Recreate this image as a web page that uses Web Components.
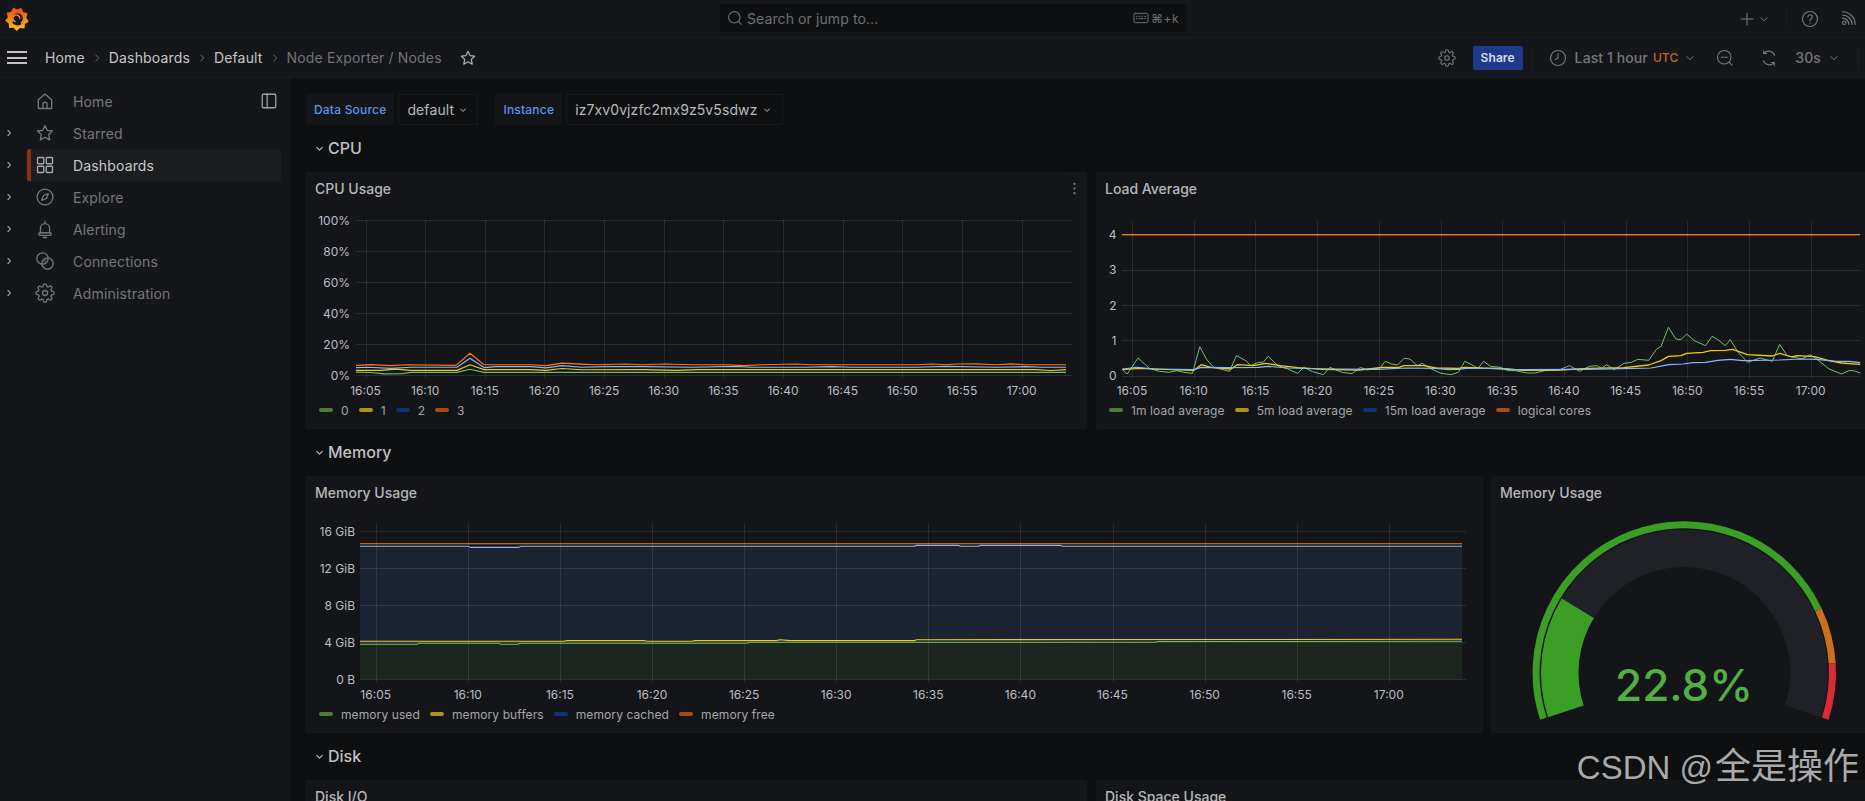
<!DOCTYPE html>
<html lang="en">
<head>
<meta charset="utf-8">
<title>Node Exporter / Nodes</title>
<style>
	html, body { margin: 0; height: 801px; overflow: hidden; background: #0e0f11; }
	body { font-family: Inter, "Liberation Sans", sans-serif; color: #c4c4c8; }
</style>
</head>
<body>
<gf-app>
	<gf-topbar slot="top"></gf-topbar>
	<gf-toolbar slot="top"></gf-toolbar>
	<gf-sidebar slot="nav">
		<gf-nav-item icon="home" dock>Home</gf-nav-item>
		<gf-nav-item icon="star" expand>Starred</gf-nav-item>
		<gf-nav-item icon="apps" expand active>Dashboards</gf-nav-item>
		<gf-nav-item icon="compass" expand>Explore</gf-nav-item>
		<gf-nav-item icon="bell" expand>Alerting</gf-nav-item>
		<gf-nav-item icon="link" expand>Connections</gf-nav-item>
		<gf-nav-item icon="cog" expand>Administration</gf-nav-item>
	</gf-sidebar>
	<gf-vars>
		<gf-var label="Data Source" value="default" style="--w:80px"></gf-var>
		<gf-var label="Instance" value="iz7xv0vjzfc2mx9z5v5sdwz" style="--w:217px"></gf-var>
	</gf-vars>
	<gf-row title="CPU" style="--cols:781px 781px;--gap:9px">
		<gf-panel title="CPU Usage" menu><gf-chart name="cpu"></gf-chart></gf-panel>
		<gf-panel title="Load Average"><gf-chart name="load"></gf-chart></gf-panel>
	</gf-row>
	<gf-row title="Memory" style="--cols:1177px 386px;--gap:8px">
		<gf-panel title="Memory Usage"><gf-chart name="memory"></gf-chart></gf-panel>
		<gf-panel title="Memory Usage"><gf-gauge value="22.8"></gf-gauge></gf-panel>
	</gf-row>
	<gf-row title="Disk" style="--cols:781px 781px;--gap:9px">
		<gf-panel title="Disk I/O"></gf-panel>
		<gf-panel title="Disk Space Usage"></gf-panel>
	</gf-row>
</gf-app>
<gf-watermark><span>CSDN @</span>全是操作</gf-watermark>

<script>
	const ICONS = {
		home: `<path d="M4 10.5 12 3.5l8 7V20a1 1 0 0 1-1 1H5a1 1 0 0 1-1-1z"/><path d="M9.5 21v-5a2.5 2.5 0 0 1 5 0v5"/>`,
		star: `<path d="M12 3l2.7 5.8 6.3.8-4.6 4.3 1.2 6.3L12 17.1l-5.6 3.1 1.2-6.3L3 9.6l6.3-.8z"/>`,
		apps: `<rect x="3" y="3" width="7.5" height="7.5" rx=".8"/><rect x="13.5" y="3" width="7.5" height="7.5" rx=".8"/><rect x="3" y="13.5" width="7.5" height="7.5" rx=".8"/><rect x="13.5" y="13.5" width="7.5" height="7.5" rx=".8"/>`,
		compass: `<circle cx="12" cy="12" r="9.5"/><path d="M16 8l-2.2 5.8L8 16l2.2-5.8z"/>`,
		bell: `<path d="M12 2.5V5M6.5 16.5V11a5.5 5.5 0 0 1 11 0v5.5"/><rect x="4.5" y="16.5" width="15" height="3.2" rx="1.4"/><path d="M10 22.2h4"/>`,
		link: `<circle cx="9" cy="9" r="6.8"/><circle cx="15" cy="15" r="6.8"/><path d="M10 13.5l3.5-3.5" stroke-width="1.2"/>`,
		cog: `<circle cx="12" cy="12" r="3"/><path d="M19.4 15a1.65 1.65 0 0 0 .33 1.82l.06.06a2 2 0 0 1-2.83 2.83l-.06-.06a1.65 1.65 0 0 0-2.82 1.18V21a2 2 0 0 1-4 0v-.09a1.65 1.65 0 0 0-2.82-1.18l-.06.06a2 2 0 0 1-2.83-2.83l.06-.06A1.65 1.65 0 0 0 3.09 14H3a2 2 0 0 1 0-4h.09A1.65 1.65 0 0 0 4.27 7.18l-.06-.06a2 2 0 0 1 2.83-2.83l.06.06A1.65 1.65 0 0 0 10 3.09V3a2 2 0 0 1 4 0v.09a1.65 1.65 0 0 0 2.82 1.18l.06-.06a2 2 0 0 1 2.83 2.83l-.06.06A1.65 1.65 0 0 0 20.91 10H21a2 2 0 0 1 0 4h-.09a1.65 1.65 0 0 0-1.51 1z"/>`,
		dock: `<rect x="3" y="3" width="18" height="18" rx="1.5"/><path d="M9.5 3v18"/>`,
		right: `<path d="M9.5 6l6 6-6 6"/>`,
		down: `<path d="M6 9.5l6 6 6-6"/>`,
		plus: `<path d="M12 3v18M3 12h18"/>`,
		help: `<circle cx="12" cy="12" r="10"/><path d="M9.2 9.3a2.9 2.9 0 1 1 4.4 2.5c-1 .6-1.6 1.2-1.6 2.4"/><path d="M12 17.3v.2"/>`,
		rss: `<circle cx="6" cy="18" r="2.4"/><path d="M3.5 11.5a9 9 0 0 1 9 9M3.5 7a13.5 13.5 0 0 1 13.5 13.5M3.5 2.5a18 18 0 0 1 18 18"/>`,
		search: `<circle cx="11" cy="11" r="8.5"/><path d="M17.3 17.3 21.5 21.5"/>`,
		clock: `<circle cx="12" cy="12" r="10"/><path d="M12 6.5V12l-3.5 2"/>`,
		zoomout: `<circle cx="11" cy="11" r="9"/><path d="M7 11h8M17.5 17.5l4 4"/>`,
		sync: `<path d="M4.5 15.5A8.5 8.5 0 0 0 19 18.2M19.5 8.5A8.5 8.5 0 0 0 5 5.8"/><path d="M5 2v4h4M19 22v-4h-4"/>`,
		keyboard: `<rect x="1.5" y="5" width="21" height="14" rx="2"/><path d="M5 9.5h1M9 9.5h1M13 9.5h1M17.5 9.5h1.5M5 13h1.5M9 13h6M17.5 13h1.5"/>`,
		kebab: `<path d="M12 4.5v.1M12 12v.1M12 19.5v.1" stroke-width="3.6"/>`,
	};

	class GfIcon extends HTMLElement {
		constructor() {
			super();
			this.attachShadow({ mode: "open" });
		}
		connectedCallback() {
			const size = this.getAttribute("size") || 16;
			const stroke = this.getAttribute("stroke") || 1.7;
			this.shadowRoot.innerHTML = `
				<style>
					:host { display: inline-flex; flex: none; width: ${size}px; height: ${size}px; }
					svg { display: block; fill: none; stroke: currentColor; stroke-linecap: round; stroke-linejoin: round; }
				</style>
				<svg width="${size}" height="${size}" viewBox="0 0 24 24" stroke-width="${stroke}">${ICONS[this.getAttribute("name")]}</svg>
			`;
		}
	}

	class GfLogo extends HTMLElement {
		constructor() {
			super();
			this.attachShadow({ mode: "open" });
		}
		getGear() {
			// contorno dentado del logo
			const pts = [];
			for (let i = 0; i < 18; i++) {
				const a = (i / 18) * Math.PI * 2 + 0.2;
				const r = i % 2 ? 9.4 : 12;
				pts.push(`${(12 + r * Math.cos(a)).toFixed(2)},${(12 + r * Math.sin(a)).toFixed(2)}`);
			}
			return pts.join(" ");
		}
		connectedCallback() {
			this.shadowRoot.innerHTML = `
				<style>:host { display: block; width: 24px; height: 24px; }</style>
				<svg width="24" height="24" viewBox="0 0 24 24">
					<defs><linearGradient id="g" x1="0" y1="0" x2="0" y2="1"><stop offset="0" stop-color="#ee4b23"/><stop offset="1" stop-color="#fbc20e"/></linearGradient></defs>
					<polygon points="${this.getGear()}" fill="url(#g)"/>
					<circle cx="12.6" cy="12.4" r="6.2" fill="#141619"/>
					<path d="M8 15a6 6 0 1 1 8 1.6" fill="none" stroke="url(#g)" stroke-width="1.5" transform="translate(-.2 -.2)"/>
					<path d="M11 15.2a3.4 3.4 0 1 1 4-2.6" fill="none" stroke="#f78e1e" stroke-width="1.4" transform="translate(-.4 -.6)"/>
				</svg>
			`;
		}
	}

	class GfApp extends HTMLElement {
		constructor() {
			super();
			this.attachShadow({ mode: "open" });
		}
		connectedCallback() {
			this.shadowRoot.innerHTML = `
				<style>
					:host { display: block; height: 801px; overflow: hidden; }
					.body { display: flex; height: 723px; }
					main { flex: 1; min-width: 0; overflow: hidden; padding: 16px 0 0 16px; }
				</style>
				<slot name="top"></slot>
				<div class="body">
					<slot name="nav"></slot>
					<main><slot></slot></main>
				</div>
			`;
		}
	}

	class GfTopbar extends HTMLElement {
		constructor() {
			super();
			this.attachShadow({ mode: "open" });
		}
		connectedCallback() {
			this.shadowRoot.innerHTML = `
				<style>
					:host { display: flex; align-items: center; height: 37px; background: #141619; border-bottom: 1px solid #1a1c1f; padding-left: 5px; position: relative; color: #77787c; box-sizing: content-box; }
					.search { position: absolute; left: 719px; top: 3px; width: 468px; height: 30px; box-sizing: border-box; display: flex; align-items: center; padding: 0 7px 0 7px; background: #0e0f11; border: 1px solid #131518; color: #6f7074; font-size: 14px; }
					.search span { margin-left: 4px; flex: 1; letter-spacing: .1px; }
					.search b { font-weight: 400; font-size: 12px; margin-left: 2px; letter-spacing: .5px; }
					.right { margin-left: auto; display: flex; align-items: center; }
					.sep { width: 1px; height: 24px; background: #191b1e; margin: 0 15px 0 16px; }
				</style>
				<gf-logo></gf-logo>
				<div class="search">
					<gf-icon name="search" size="16"></gf-icon>
					<span>Search or jump to...</span>
					<gf-icon name="keyboard" size="16" stroke="1.5"></gf-icon>
					<b>⌘+k</b>
				</div>
				<div class="right">
					<gf-icon name="plus" size="16" stroke="1.6"></gf-icon>
					<gf-icon name="down" size="12" style="margin-left:3px" stroke="2"></gf-icon>
					<div class="sep"></div>
					<gf-icon name="help" size="18" stroke="1.5" style="margin:0 -1px"></gf-icon>
					<gf-icon name="rss" size="17" stroke="1.6" style="margin:0 8px 0 22px"></gf-icon>
				</div>
			`;
		}
	}

	class GfToolbar extends HTMLElement {
		constructor() {
			super();
			this.attachShadow({ mode: "open" });
		}
		connectedCallback() {
			this.shadowRoot.innerHTML = `
				<style>
					:host { display: flex; align-items: center; height: 39px; background: #141619; border-bottom: 1px solid #1a1c1f; color: #c6c6c8; font-size: 14px; letter-spacing: .15px; }
					.burger { width: 20px; height: 13px; margin: 0 18px 0 7px; border-top: 2px solid #c4c4c8; border-bottom: 2px solid #c4c4c8; box-sizing: border-box; position: relative; }
					.burger::after { content: ""; position: absolute; left: 0; right: 0; top: 3.5px; height: 2px; background: #c4c4c8; }
					.sep { color: #6c6d70; margin: 0 6px; }
					.last { color: #737478; }
					.star { margin-left: 17px; color: #b5b5b8; }
					.right { margin-left: auto; display: flex; align-items: center; color: #77787c; font-weight: 500; letter-spacing: .1px; }
					.share { background: #1f3a8a; color: #d7dbe8; font-size: 12px; height: 24px; width: 50px; border-radius: 2px; display: flex; align-items: center; justify-content: center; margin: 0 9px 0 17px; font-weight: 600; }
					.div { width: 1px; height: 24px; background: #1b1d20; }
					.utc { color: #c4691f; font-size: 12px; margin: 0 6px 0 5px; }
				</style>
				<div class="burger"></div>
				<span>Home</span><gf-icon class="sep" name="right" size="12" stroke="2"></gf-icon>
				<span>Dashboards</span><gf-icon class="sep" name="right" size="12" stroke="2"></gf-icon>
				<span>Default</span><gf-icon class="sep" name="right" size="12" stroke="2"></gf-icon>
				<span class="last">Node Exporter / Nodes</span>
				<gf-icon class="star" name="star" size="18" stroke="1.6"></gf-icon>
				<div class="right">
					<gf-icon name="cog" size="18" stroke="1.5"></gf-icon>
					<div class="share">Share</div>
					<div class="div"></div>
					<gf-icon name="clock" size="18" stroke="1.5" style="margin:0 8px 0 16px"></gf-icon>
					<span>Last 1 hour</span>
					<span class="utc">UTC</span>
					<gf-icon name="down" size="12" stroke="2"></gf-icon>
					<gf-icon name="zoomout" size="18" stroke="1.5" style="margin-left:20px"></gf-icon>
					<gf-icon name="sync" size="18" stroke="1.5" style="margin:0 17px 0 26px"></gf-icon>
					<span>30s</span>
					<gf-icon name="down" size="12" stroke="2" style="margin:0 18px 0 7px"></gf-icon>
					<div class="div" style="margin-right:6px"></div>
				</div>
			`;
		}
	}

	class GfSidebar extends HTMLElement {
		constructor() {
			super();
			this.attachShadow({ mode: "open" });
		}
		connectedCallback() {
			this.shadowRoot.innerHTML = `
				<style>
					:host { display: block; flex: none; width: 290px; box-sizing: border-box; background: #141619; padding-top: 7px; }
				</style>
				<slot></slot>
			`;
		}
	}

	class GfNavItem extends HTMLElement {
		constructor() {
			super();
			this.attachShadow({ mode: "open" });
		}
		connectedCallback() {
			const active = this.hasAttribute("active");
			this.shadowRoot.innerHTML = `
				<style>
					:host { display: flex; align-items: center; height: 32px; color: ${active ? "#c8c8ca" : "#76777a"}; font-size: 14px; letter-spacing: .15px; position: relative; }
					.caret { width: 27px; flex: none; display: flex; justify-content: center; padding-right: 9px; box-sizing: border-box; color: #9a9b9e; }
					.row { flex: none; width: 254px; height: 32px; display: flex; align-items: center; box-sizing: border-box; background: ${active ? "#1b1d20" : "transparent"}; border-left: 4px solid ${active ? "#8a3113" : "transparent"}; border-radius: 2px; padding-left: 4px; }
					.ico { color: ${active ? "#a8a8ab" : "#76777a"}; margin-right: 18px; }
					.dock { margin-left: auto; margin-right: 3px; color: #a0a1a4; }
				</style>
				<div class="caret">${this.hasAttribute("expand") ? `<gf-icon name="right" size="10" stroke="2.6"></gf-icon>` : ""}</div>
				<div class="row">
					<gf-icon class="ico" name="${this.getAttribute("icon")}" size="20" stroke="1.6"></gf-icon>
					<slot></slot>
					${this.hasAttribute("dock") ? `<gf-icon class="dock" name="dock" size="18" stroke="1.7"></gf-icon>` : ""}
				</div>
			`;
		}
	}

	class GfVars extends HTMLElement {
		constructor() {
			super();
			this.attachShadow({ mode: "open" });
		}
		connectedCallback() {
			this.shadowRoot.innerHTML = `
				<style>:host { display: flex; gap: 17px; height: 31px; }</style>
				<slot></slot>
			`;
		}
	}

	class GfVar extends HTMLElement {
		constructor() {
			super();
			this.attachShadow({ mode: "open" });
		}
		connectedCallback() {
			this.shadowRoot.innerHTML = `
				<style>
					:host { display: flex; gap: 4px; height: 31px; }
					.label { display: flex; align-items: center; padding: 0 8px; background: #131518; color: #5c95ea; font-size: 12px; font-weight: 500; letter-spacing: .2px; }
					.value { display: flex; align-items: center; box-sizing: border-box; width: var(--w); padding-left: 8px; background: #0e0f11; border: 1px solid #17191c; color: #b9b9bb; font-size: 14px; gap: 4px; letter-spacing: .1px; }
				</style>
				<div class="label">${this.getAttribute("label")}</div>
				<div class="value">${this.getAttribute("value")}<gf-icon name="down" size="10" stroke="2.4"></gf-icon></div>
			`;
		}
	}

	class GfRow extends HTMLElement {
		constructor() {
			super();
			this.attachShadow({ mode: "open" });
		}
		connectedCallback() {
			this.shadowRoot.innerHTML = `
				<style>
					:host { display: block; }
					.head { height: 47px; display: flex; align-items: center; padding: 0 0 1px 8px; box-sizing: border-box; color: #c0c0c3; font-size: 16px; font-weight: 500; gap: 3px; }
					.panels { display: grid; grid-template-columns: var(--cols); gap: var(--gap); width: 1600px; }
				</style>
				<div class="head"><gf-icon name="down" size="11" stroke="2.4"></gf-icon>${this.getAttribute("title")}</div>
				<div class="panels"><slot></slot></div>
			`;
		}
	}

	class GfPanel extends HTMLElement {
		constructor() {
			super();
			this.attachShadow({ mode: "open" });
		}
		connectedCallback() {
			this.shadowRoot.innerHTML = `
				<style>
					:host { display: block; height: 257px; position: relative; background: #131518; border: 1px solid #16181b; box-sizing: border-box; border-radius: 2px; overflow: hidden; }
					.title { height: 34px; box-sizing: border-box; padding: 7px 8px 0; font-size: 14px; line-height: 17px; font-weight: 500; color: #b7b7b9; }
					.menu { position: absolute; right: 0; top: 0; width: 24px; height: 33px; background: #141619; color: #77787b; display: flex; justify-content: center; padding-top: 8px; box-sizing: border-box; }
				</style>
				<div class="title">${this.getAttribute("title")}</div>
				${this.hasAttribute("menu") ? `<div class="menu"><gf-icon name="kebab" size="15"></gf-icon></div>` : ""}
				<slot></slot>
			`;
		}
	}

	const GREEN = { line: "#73bf69", key: "#4e7c37" };
	const YELLOW = { line: "#f2cc0c", key: "#ad9317" };
	const BLUE = { line: "#8ab8ff", key: "#123179" };
	const ORANGE = { line: "#ff780a", key: "#ab4a13" };
	const TIMES = ["16:05", "16:10", "16:15", "16:20", "16:25", "16:30", "16:35", "16:40", "16:45", "16:50", "16:55", "17:00"];

	// puntos de la grafica de load, tomados de la captura ampliada
	const fromLoad = (pts) => pts.map(([x, y]) => [x / 2.023 - 5.9, y / 3 - 48]);
	const cpuY = (pts) => pts.map(([x, v]) => [x, 168 - v * 1.55]);

	const CHARTS = {
		cpu: {
			left: 50, right: 766, top: 13, bottom: 168, labelRight: 44,
			first: 59.5, step: 59.65,
			ticks: [["100%", 13], ["80%", 44], ["60%", 75], ["40%", 106], ["20%", 137], ["0%", 168]],
			width: 1.2,
			series: [
				{ name: "0", ...GREEN, pts: cpuY([[50, 1.9], [65, 1.6], [78, .7], [95, .8], [105, 1.7], [151, 1.7], [164, 3.7], [178, 1.7], [760, 1.7]]) },
				{ name: "1", ...YELLOW, pts: cpuY([[50, 3], [75, 3], [90, 3.8], [105, 3], [151, 3], [164, 6.6], [178, 3.5], [225, 3.5], [240, 3], [256, 4.2], [275, 3.4], [340, 3.5], [370, 3], [390, 3.5], [730, 3.5], [745, 2.9], [760, 3.5]]) },
				{ name: "2", ...BLUE, pts: cpuY([[50, 4.7], [62, 5], [85, 4.3], [105, 5], [151, 5], [164, 10.8], [178, 4.8], [190, 5.4], [225, 5.4], [240, 4.6], [256, 6], [275, 5], [300, 5.4], [340, 5.4], [385, 5], [430, 5.6], [445, 5], [500, 5], [525, 5.4], [545, 5], [610, 5], [640, 5.6], [690, 5], [720, 5.4], [735, 5], [760, 5]]) },
				{ name: "3", ...ORANGE, pts: cpuY([[50, 6.2], [65, 6.7], [85, 6], [100, 6.6], [150, 6.2], [164, 14], [178, 6.6], [225, 6.6], [240, 6], [256, 7.7], [275, 7], [290, 6.6], [320, 7.1], [335, 6.6], [360, 7.1], [385, 6.6], [420, 6.6], [438, 6], [455, 6.6], [490, 7.1], [505, 6.6], [610, 6.6], [625, 7.1], [640, 6.6], [650, 7.1], [670, 7.2], [690, 6.6], [705, 7.2], [720, 6.6], [760, 6.6]]) },
			],
		},
		load: {
			left: 26, right: 764, top: 13.7, bottom: 168.7, labelRight: 20.5,
			first: 36, step: 61.7, width: 1,
			ticks: [["4", 27.7], ["3", 62.7], ["2", 98], ["1", 133.3], ["0", 168.7]],
			series: [
				{ name: "1m load average", ...GREEN, pts: fromLoad([[65,630],[75,645],[97,597],[120,628],[140,637],[160,640],[175,635],[190,640],[207,643],[222,563],[235,600],[250,625],[282,637],[296,590],[315,605],[325,620],[340,610],[350,610],[360,592],[380,620],[400,630],[420,643],[432,625],[450,638],[472,647],[485,625],[510,640],[530,644],[547,625],[560,633],[575,628],[585,630],[597,607],[610,615],[622,618],[635,598],[647,600],[662,620],[672,613],[690,630],[710,643],[730,647],[745,640],[758,607],[778,622],[785,628],[796,607],[810,622],[830,625],[845,635],[860,635],[885,642],[900,642],[920,635],[950,632],[970,620],[990,637],[1010,622],[1025,620],[1035,628],[1045,617],[1060,632],[1080,613],[1095,610],[1108,601],[1130,604],[1145,572],[1155,562],[1170,505],[1185,540],[1195,542],[1207,525],[1222,545],[1245,560],[1258,532],[1270,542],[1285,560],[1295,542],[1310,578],[1330,610],[1355,597],[1380,607],[1395,556],[1410,590],[1425,595],[1440,600],[1456,587],[1470,600],[1495,630],[1520,645],[1535,635],[1545,635],[1558,642]]) },
				{ name: "5m load average", ...YELLOW, width: 1.3, pts: fromLoad([[65,632],[100,628],[150,631],[210,634],[225,617],[245,625],[285,630],[298,617],[330,620],[355,613],[385,620],[420,626],[470,631],[545,633],[590,625],[625,625],[635,620],[675,620],[700,627],[745,628],[758,625],[840,630],[880,634],[950,633],[1010,628],[1080,626],[1130,618],[1155,605],[1170,592],[1195,590],[1207,583],[1240,580],[1255,575],[1285,574],[1300,571],[1330,587],[1380,591],[1395,583],[1420,594],[1430,590],[1465,593],[1495,605],[1520,612],[1558,616]]) },
				{ name: "15m load average", ...BLUE, width: 1.2, pts: fromLoad([[65,630],[95,625],[130,630],[210,632],[225,625],[280,626],[340,625],[360,622],[400,627],[500,630],[580,631],[640,627],[700,628],[725,632],[745,631],[760,628],[830,628],[860,632],[1000,631],[1100,628],[1135,627],[1170,617],[1200,615],[1220,611],[1245,610],[1270,604],[1295,601],[1320,605],[1395,603],[1440,600],[1470,601],[1510,607],[1535,607],[1558,611]]) },
				{ name: "logical cores", ...ORANGE, width: 1.2, pts: [[26, 27.7], [764, 27.7]] },
			],
		},
		memory: {
			left: 54, right: 1160, top: 13, bottom: 168.3, labelRight: 49,
			first: 69.7, step: 92.1, width: 1.1,
			ticks: [["16 GiB", 20], ["12 GiB", 57.3], ["8 GiB", 94.3], ["4 GiB", 131.3], ["0 B", 168.3]],
			series: [
				{ name: "memory used", ...GREEN, fill: "#1c251e", pts: [[54, 133.3], [111, 133.3], [113, 132.3], [193, 132.3], [195, 133.3], [212, 133.3], [214, 132.3], [441, 132.3], [444, 131.3], [850, 131.3], [852, 130.5], [1156, 130.3]] },
				{ name: "memory buffers", ...YELLOW, pts: [[54, 130.3], [258, 130.3], [261, 129.6], [338, 129.6], [341, 130.3], [386, 130.3], [389, 129.6], [470, 129.6], [474, 128.7], [484, 129.6], [608, 129.6], [611, 128.7], [1156, 128.3]] },
				{ name: "memory cached", ...BLUE, fill: "#1b2430", pts: [[54, 35.3], [162, 35.3], [165, 36.4], [212, 36.4], [215, 35.3], [608, 35.3], [611, 34.4], [652, 34.4], [655, 35.2], [672, 35.2], [675, 34.4], [754, 34.4], [757, 35.2], [1156, 35.2]] },
				{ name: "memory free", ...ORANGE, pts: [[54, 32.7], [1156, 32.7]] },
			],
		},
	};

	class GfChart extends HTMLElement {
		constructor() {
			super();
			this.attachShadow({ mode: "open" });
		}
		getFills(c) {
			// primero el area de cached y encima la de used
			return [...c.series].reverse().filter((s) => s.fill).map((s) => {
				const line = s.pts.map((p) => p.join(",")).join(" L");
				return `<path d="M${line} L${s.pts[s.pts.length - 1][0]},${c.bottom} L${s.pts[0][0]},${c.bottom}Z" fill="${s.fill}"/>`;
			}).join("");
		}
		getGrid(c) {
			const line = (x1, y1, x2, y2) => `<line x1="${x1}" y1="${y1}" x2="${x2}" y2="${y2}"/>`;
			const h = c.ticks.map(([, y]) => line(c.left, Math.round(y) + 0.5, c.right, Math.round(y) + 0.5));
			const v = TIMES.map((_, i) => {
				const x = Math.round(c.first + c.step * i) + 0.5;
				return line(x, c.top, x, c.bottom + 3);
			});
			return `<g stroke="#ccccdc" stroke-opacity=".12" shape-rendering="crispEdges">${h.join("")}${v.join("")}</g>`;
		}
		getLabels(c) {
			const y = c.ticks.map(([t, v]) => `<text x="${c.labelRight}" y="${v + 4.5}" text-anchor="end">${t}</text>`);
			const x = TIMES.map((t, i) => `<text x="${c.first + c.step * i}" y="188" text-anchor="middle">${t}</text>`);
			return `<g fill="#bdbdc6" font-size="12">${y.join("")}${x.join("")}</g>`;
		}
		getLines(c) {
			return c.series.map((s) => `<polyline points="${s.pts.map((p) => p.join(",")).join(" ")}" fill="none" stroke="${s.line}" stroke-width="${s.width || c.width}" stroke-linejoin="round"/>`).join("");
		}
		connectedCallback() {
			const c = CHARTS[this.getAttribute("name")];
			this.shadowRoot.innerHTML = `
				<style>
					:host { display: block; }
					svg { display: block; margin-left: -1px; font-family: Inter, "Liberation Sans", sans-serif; }
					.legend { display: flex; align-items: center; gap: 10px; height: 20px; padding-left: 12px; font-size: 12px; letter-spacing: .1px; color: #a6a6a9; }
					.item { display: flex; align-items: center; gap: 8px; }
					.item i { width: 14px; height: 4px; border-radius: 2px; }
				</style>
				<svg width="${c.right + 16}" height="193">
					${this.getFills(c)}${this.getGrid(c)}${this.getLines(c)}${this.getLabels(c)}
				</svg>
				<div class="legend">
					${c.series.map((s) => `<div class="item"><i style="background:${s.key}"></i>${s.name}</div>`).join("")}
				</div>
			`;
		}
	}

	class GfGauge extends HTMLElement {
		constructor() {
			super();
			this.attachShadow({ mode: "open" });
		}
		// p va de 0 a 1 sobre un barrido de 216 grados
		arc(r, from, to) {
			const cx = 192.3, cy = 161.9;
			const at = (p) => {
				const a = ((-18 + 216 * p) * Math.PI) / 180;
				return `${(cx - r * Math.cos(a)).toFixed(2)} ${(cy - r * Math.sin(a)).toFixed(2)}`;
			};
			return `M${at(from)} A${r} ${r} 0 ${(to - from) * 216 > 180 ? 1 : 0} 1 ${at(to)}`;
		}
		connectedCallback() {
			const v = Number(this.getAttribute("value"));
			this.shadowRoot.innerHTML = `
				<style>
					:host { display: block; }
					svg { display: block; font-family: Inter, "Liberation Sans", sans-serif; }
					path { fill: none; }
				</style>
				<svg width="384" height="220">
					<path d="${this.arc(124.6, 0, 1)}" stroke="#202126" stroke-width="37.5"/>
					<path d="${this.arc(124.6, 0, v / 100)}" stroke="#3a9f24" stroke-width="37.5"/>
					<path d="${this.arc(148.2, 0, 0.8)}" stroke="#3a9f24" stroke-width="7"/>
					<path d="${this.arc(148.2, 0.8, 0.9)}" stroke="#c9701f" stroke-width="7"/>
					<path d="${this.arc(148.2, 0.9, 1)}" stroke="#d92b34" stroke-width="7"/>
					<text x="192" y="189.5" text-anchor="middle" font-size="44" font-weight="500" fill="#54ae46">${v}%</text>
				</svg>
			`;
		}
	}

	class GfWatermark extends HTMLElement {
		constructor() {
			super();
			this.attachShadow({ mode: "open" });
		}
		connectedCallback() {
			this.shadowRoot.innerHTML = `
				<style>
					:host { position: absolute; right: 6px; top: 744px; font: 36px/46px "Liberation Sans", "Noto Sans CJK SC", sans-serif; color: #a9a9a9; white-space: nowrap; }
					::slotted(span) { font-size: 33px; margin-right: 2px; }
				</style>
				<slot></slot>
			`;
		}
	}

	customElements.define("gf-icon", GfIcon);
	customElements.define("gf-logo", GfLogo);
	customElements.define("gf-app", GfApp);
	customElements.define("gf-topbar", GfTopbar);
	customElements.define("gf-toolbar", GfToolbar);
	customElements.define("gf-sidebar", GfSidebar);
	customElements.define("gf-nav-item", GfNavItem);
	customElements.define("gf-vars", GfVars);
	customElements.define("gf-var", GfVar);
	customElements.define("gf-row", GfRow);
	customElements.define("gf-panel", GfPanel);
	customElements.define("gf-chart", GfChart);
	customElements.define("gf-gauge", GfGauge);
	customElements.define("gf-watermark", GfWatermark);
</script>
</body>
</html>
